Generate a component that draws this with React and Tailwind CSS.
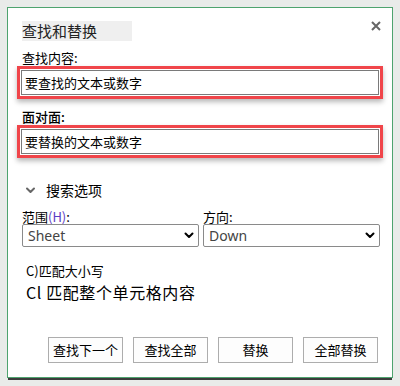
import { useState } from 'react';

const cjk = { fontFamily: '"Noto Sans CJK SC", "Noto Sans", sans-serif' };

function Chevron({ className }) {
  return (
    <svg className={className} viewBox="0 0 10 7" fill="none" stroke="currentColor" strokeWidth={2} strokeLinecap="round" strokeLinejoin="round">
      <path d="M1.5 1.5 5 5l3.5-3.5" />
    </svg>
  );
}

function RedInput({ value }) {
  return (
    <div className="mx-[9px] border-[3px] border-[#f0454a] p-[1px] shadow-[0_3px_5px_rgba(0,0,0,0.28)]">
      <div className="h-[25px] border border-[#7a7a7a] bg-white pl-[3px] flex items-center text-[13px] text-black">
        {value}
      </div>
    </div>
  );
}

function Select({ value }) {
  return (
    <div className="h-[23px] border border-[#8a8a8a] rounded-[2px] bg-white flex items-center justify-between pl-[5px] pr-[4px]">
      <span className="text-[14px] text-[#444]" style={{ fontFamily: '"Noto Sans", sans-serif' }}>{value}</span>
      <Chevron className="w-[10px] h-[7px] text-black" />
    </div>
  );
}

export default function App() {
  const [open] = useState(true);
  const BUTTONS = ['查找下一个', '查找全部', '替换', '全部替换'];

  return (
    <div className="w-[400px] h-[386px] bg-[#e9ebe9] pt-[7px] pl-[7px] overflow-hidden" style={cjk}>
      <div className="w-[386px] h-[371px] border border-[#4ea36e] bg-white shadow-[0_3px_0_-1px_#3c3c3c]">
        {/* header */}
        <div className="flex justify-between pt-[13px] pl-[14px] pr-[11px]">
          <span className="w-[110px] bg-[#efefef] text-[15px] leading-[20px] text-[#222]">查找和替换</span>
          <svg className="w-[10px] h-[10px] text-[#666]" viewBox="0 0 10 10" stroke="currentColor" strokeWidth={2}>
            <path d="M1 1l8 8M9 1 1 9" />
          </svg>
        </div>

        <div className="mt-[8px] pl-[14px] text-[13px] leading-[17px] text-black">查找内容:</div>
        <RedInput value="要查找的文本或数字" />

        <div className="mt-[10px] pl-[14px] text-[13px] leading-[16px] text-black font-medium">面对面:</div>
        <RedInput value="要替换的文本或数字" />

        {/* options */}
        <div className="mt-[22px] pl-[17px] flex items-center gap-[10px] h-[20px]">
          <Chevron className={`w-[11px] h-[7px] text-[#666] ${open ? '' : '-rotate-90'}`} />
          <span className="text-[14px] text-black">搜索选项</span>
        </div>

        <div className="mt-[9px] pl-[14px] pr-[12px] grid grid-cols-[177px_177px] gap-x-[4px]">
          <div className="text-[13px] leading-[15px] text-black">
            范围<span className="text-[#5b3cc4]">(H)</span>:
          </div>
          <div className="text-[13px] leading-[15px] text-black">方向:</div>
          <Select value="Sheet" />
          <Select value="Down" />
        </div>

        <div className="mt-[15px] pl-[18px] text-[13px] leading-[18px] text-black">C)匹配大小写</div>
        <div className="mt-[1px] pl-[18px] text-[16px] leading-[22px] tracking-[0.6px] text-black">Cl 匹配整个单元格内容</div>

        {/* buttons */}
        <div className="mt-[34px] pl-[40px] flex gap-[10px]">
          {BUTTONS.map(b => (
            <button key={b} type="button"
              className="w-[75px] h-[26px] border border-[#adadad] bg-[#fdfdfd] text-[13px] text-black flex items-center justify-center">
              {b}
            </button>
          ))}
        </div>
      </div>
    </div>
  );
}
